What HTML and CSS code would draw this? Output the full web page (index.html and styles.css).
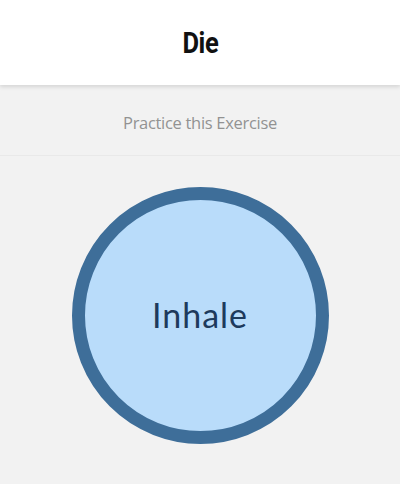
FILE: index.html
```html
<!DOCTYPE html>
<html>
<head>
<meta charset="utf-8">
<link rel="stylesheet" href="styles.css">
</head>
<body>
<div class="app">
  <header class="header"><h1 class="title">Die</h1></header>
  <div class="subbar">Practice this Exercise</div>
  <main class="stage">
    <div class="breath"><span class="breath-label">Inhale</span></div>
  </main>
</div>
</body>
</html>
```
FILE: styles.css
```css
html, body { margin: 0; padding: 0; }
body { background: #f2f2f2; width: 400px; height: 484px; overflow: hidden; }
.app { display: flex; flex-direction: column; height: 484px; }
.header {
  height: 85px; background: #fff; display: flex; align-items: center; justify-content: center;
  box-shadow: 0 2px 4px rgba(0,0,0,0.12); position: relative; z-index: 1;
}
.title {
  margin: 0; font-family: Roboto, "Liberation Sans", sans-serif; font-weight: 700;
  font-size: 29px; color: #111; letter-spacing: -0.5px; transform: scaleX(0.88);
}
.subbar {
  height: 71px; display: flex; align-items: center; justify-content: center;
  font-family: "Open Sans", sans-serif; font-size: 16.5px; color: #929292;
  border-bottom: 1px solid #e9e9e9; letter-spacing: -0.3px; padding-top: 5px; box-sizing: border-box;
}
.stage { flex: 1; display: flex; justify-content: center; padding-top: 31px; }
.breath {
  width: 231px; height: 231px; border-radius: 50%; border: 13px solid #3e6e99;
  background: #b9dcfa; display: flex; align-items: center; justify-content: center;
}
.breath-label {
  font-family: Lato, "Open Sans", sans-serif; font-size: 34px; color: #1d3a5c;
  letter-spacing: 1px; margin-bottom: 2px;
}
```
